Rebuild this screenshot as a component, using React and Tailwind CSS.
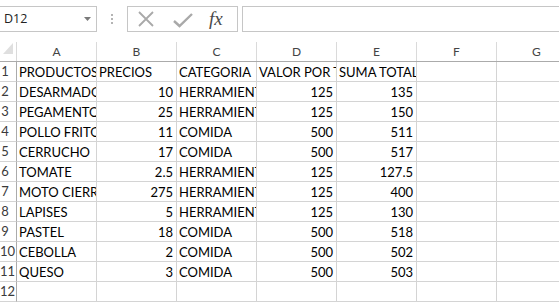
const columns = ["A", "B", "C", "D", "E", "F", "G"];

const rows = [
  ["PRODUCTOS", "PRECIOS", "CATEGORIA", "VALOR POR TIPO", "SUMA TOTAL"],
  ["DESARMADOR", 10, "HERRAMIENTAS", 125, 135],
  ["PEGAMENTO", 25, "HERRAMIENTAS", 125, 150],
  ["POLLO FRITO", 11, "COMIDA", 500, 511],
  ["CERRUCHO", 17, "COMIDA", 500, 517],
  ["TOMATE", 2.5, "HERRAMIENTAS", 125, 127.5],
  ["MOTO CIERRA", 275, "HERRAMIENTAS", 125, 400],
  ["LAPISES", 5, "HERRAMIENTAS", 125, 130],
  ["PASTEL", 18, "COMIDA", 500, 518],
  ["CEBOLLA", 2, "COMIDA", 500, 502],
  ["QUESO", 3, "COMIDA", 500, 503],
  [],
];

function FormulaBar() {
  return (
    <div className="flex h-[42px] items-start pt-[6px]">
      <div className="flex h-[26px] w-[97px] shrink-0 items-center justify-between border border-l-0 border-[#c6c6c6] pl-[4px] pr-[5px]">
        <span className="text-[12.5px] text-[#222] font-['Open_Sans',sans-serif]">D12</span>
        <svg width="7" height="4" viewBox="0 0 7 4">
          <path d="M0 0H7L3.5 4Z" fill="#7a7a7a" />
        </svg>
      </div>
      <div className="flex h-[26px] w-[30px] shrink-0 flex-col items-center justify-center gap-[2px] pr-[1px]">
        <span className="h-[2px] w-[2px] bg-[#b4b4b4]" />
        <span className="h-[2px] w-[2px] bg-[#b4b4b4]" />
        <span className="h-[2px] w-[2px] bg-[#b4b4b4]" />
      </div>
      <div className="flex h-[26px] w-[111px] shrink-0 items-center border border-[#c6c6c6] pl-[10px]">
        <svg width="16" height="16" viewBox="0 0 16 16">
          <path d="M1 1L15 15M15 1L1 15" stroke="#a9a9a9" strokeWidth="1.8" fill="none" />
        </svg>
        <svg width="20" height="15" viewBox="0 0 20 15" className="ml-[19px] mt-[2px]">
          <path d="M1 8L6.5 13L19 1" stroke="#a9a9a9" strokeWidth="2.4" fill="none" />
        </svg>
        <span className="ml-[16px] -mt-[2px] text-[19px] italic leading-none text-[#4a4a4a] font-['Liberation_Serif',serif]">
          fx
        </span>
      </div>
      <div className="ml-[4px] h-[26px] flex-1 border border-r-0 border-[#c6c6c6]" />
    </div>
  );
}

function HeaderRow() {
  return (
    <div className="flex h-[20px] border-b border-[#ababab]">
      <div className="relative w-[17px] shrink-0 border-r border-[#dadada]">
        <svg width="17" height="19" viewBox="0 0 17 19" className="absolute left-0 top-0">
          <path d="M13 1V12H3Z" fill="#dfdfdf" />
        </svg>
      </div>
      {columns.map((c) => (
        <div
          key={c}
          className="flex w-[80px] shrink-0 items-center justify-center border-r border-[#dadada] text-[12px] leading-[19px] text-[#444]"
        >
          {c}
        </div>
      ))}
    </div>
  );
}

function DataRow({ num, cells }) {
  return (
    <div className="flex h-[20px]">
      <div className="w-[17px] shrink-0 border-r border-b border-r-[#ababab] border-b-[#d4d4d4] text-[13px] leading-[19px] text-[#3a3a3a]">
        <span className="block w-[10px] text-center">{num}</span>
      </div>
      {columns.map((c, i) => {
        const value = cells[i];
        const isNum = typeof value === "number";
        return (
          <div
            key={c}
            className={
              "w-[80px] shrink-0 overflow-hidden whitespace-nowrap border-r border-b border-[#d4d4d4] pt-px text-[13px] leading-[18px] text-black " +
              (isNum ? "pr-[3px] text-right" : "pl-[2px] text-left")
            }
          >
            {value}
          </div>
        );
      })}
    </div>
  );
}

export default function App() {
  return (
    <div className="h-[302px] w-[559px] overflow-hidden bg-white font-['Lato',sans-serif]">
      <FormulaBar />
      <HeaderRow />
      {rows.map((cells, i) => (
        <DataRow key={i} num={i + 1} cells={cells} />
      ))}
    </div>
  );
}
